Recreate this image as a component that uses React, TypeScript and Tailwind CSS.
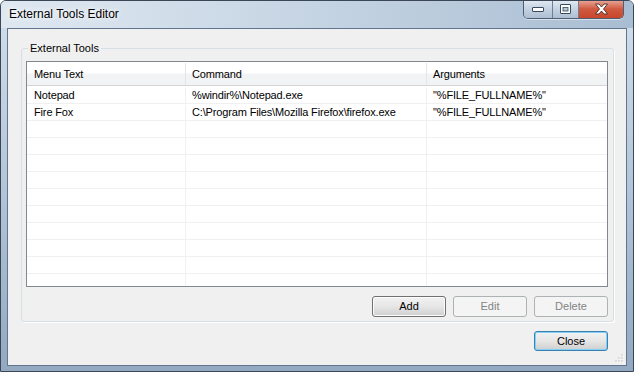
import React from 'react';

const rows = [
  { name: 'Notepad', command: '%windir%\\Notepad.exe', args: '"%FILE_FULLNAME%"' },
  { name: 'Fire Fox', command: 'C:\\Program Files\\Mozilla Firefox\\firefox.exe', args: '"%FILE_FULLNAME%"' },
];

const EMPTY_ROWS = 11;

function CaptionButtons() {
  return (
    <div className="ml-auto mr-[9px] flex h-[19px] -mt-[1px] rounded-b-[5px] border border-t-0 border-[#4d5f74] overflow-hidden shadow-[0_1px_0_rgba(255,255,255,0.5)]">
      {/* minimize */}
      <div className="w-[29px] flex items-center justify-center bg-gradient-to-b from-[#e3ebf3] via-[#c4d2e1] to-[#aebfd3] border-r border-[#6b7f96]">
        <svg width="12" height="6" viewBox="0 0 12 6">
          <rect x="0.5" y="1.5" width="11" height="4" fill="#fff" stroke="#394a5e" rx="0.5" />
        </svg>
      </div>
      {/* maximize */}
      <div className="w-[26px] flex items-center justify-center bg-gradient-to-b from-[#e3ebf3] via-[#c4d2e1] to-[#aebfd3] border-r border-[#6b7f96]">
        <svg width="11" height="10" viewBox="0 0 11 10">
          <rect x="0.5" y="0.5" width="10" height="9" fill="#fff" stroke="#394a5e" rx="0.5" />
          <rect x="3" y="3.5" width="5" height="3.5" fill="#b7c6d6" stroke="#394a5e" strokeWidth="0.8" />
        </svg>
      </div>
      {/* close */}
      <div className="w-[44px] flex items-center justify-center bg-gradient-to-b from-[#e9a99a] via-[#cf5a40] to-[#c9452b]">
        <svg width="15" height="12" viewBox="0 0 15 12">
          <path
            d="M1.5 1 L5 1 L7.5 4 L10 1 L13.5 1 L9.5 6 L13.5 11 L10 11 L7.5 8 L5 11 L1.5 11 L5.5 6 Z"
            fill="#fff"
            stroke="#4a2a22"
            strokeWidth="0.9"
            strokeLinejoin="round"
          />
        </svg>
      </div>
    </div>
  );
}

function WinButton({ label, disabled, isDefault }: { label: string; disabled?: boolean; isDefault?: boolean }) {
  if (disabled) {
    return (
      <div className="w-[74px] h-[21px] rounded-[3px] border border-[#adb2b5] bg-[#f4f4f4] flex items-center justify-center text-[11px] text-[#838383]">
        {label}
      </div>
    );
  }
  return (
    <div
      className={
        isDefault
          ? 'w-[74px] h-[20px] rounded-[3px] border border-[#3c7fb1] shadow-[inset_0_0_0_1px_#7fd1f5] bg-gradient-to-b from-[#f2f2f2] via-[#e6e6e6] to-[#cfcfcf] flex items-center justify-center text-[11px] text-black'
          : 'w-[74px] h-[21px] rounded-[3px] border border-[#707070] shadow-[inset_0_0_0_1px_#fcfcfc] bg-gradient-to-b from-[#f2f2f2] via-[#e6e6e6] to-[#cfcfcf] flex items-center justify-center text-[11px] text-black'
      }
    >
      {label}
    </div>
  );
}

export default function App() {
  return (
    <div className="w-[634px] h-[372px] flex flex-col border border-[#3b4756] rounded-t-[6px] bg-gradient-to-b from-[#d3dfeb] via-[#b3c5d8] to-[#93a9c1] font-['Liberation_Sans',Arial,sans-serif] overflow-hidden">
      {/* Title bar */}
      <div className="h-[27px] flex items-start shrink-0 bg-gradient-to-r from-[#dfe8f1] via-[#c5d4e3] to-[#a9bdd2]">
        <span className="pl-[8px] pt-[6px] text-[12px] leading-[14px] text-black [text-shadow:0_0_8px_#fff,0_0_4px_#fff]">
          External Tools Editor
        </span>
        <CaptionButtons />
      </div>

      {/* Client area */}
      <div className="mx-[6px] mb-[5px] h-[338px] border border-[#60758e] bg-[#f0f0f0] flex flex-col relative">
        {/* Group box */}
        <div className="ml-[13px] mt-[19px] w-[593px] h-[274px] rounded-[3px] border border-[#d5dfe5] shadow-[1px_1px_0_#fff] relative flex flex-col">
          <span className="absolute left-[6px] -top-[7px] px-[2px] bg-[#f0f0f0] text-[11px] leading-[13px] text-black">
            External Tools
          </span>

          {/* List view */}
          <div className="ml-[4px] mt-[12px] w-[582px] h-[226px] border border-[#828790] bg-white flex flex-col overflow-hidden text-[11px] tracking-[-0.15px] text-black">
            <div className="h-[24px] pt-[1px] flex shrink-0 border-b border-[#d5d5d5] bg-[linear-gradient(to_bottom,#ffffff_0%,#ffffff_45%,#f2f3f5_55%,#f2f3f5_100%)]">
              <div className="w-[159px] pl-[7px] flex items-center border-r border-[#e3e5e8]">Menu Text</div>
              <div className="w-[241px] pl-[6px] flex items-center border-r border-[#e3e5e8]">Command</div>
              <div className="flex-1 pl-[6px] flex items-center">Arguments</div>
            </div>
            <div className="h-[1px] shrink-0" />
            {rows.map((r) => (
              <div key={r.name} className="h-[17px] pt-[1px] flex shrink-0 border-b border-[#f0f0f0]">
                <div className="w-[159px] pl-[7px] flex items-center border-r border-[#f0f0f0]">{r.name}</div>
                <div className="w-[241px] pl-[6px] flex items-center border-r border-[#f0f0f0]">{r.command}</div>
                <div className="flex-1 pl-[6px] flex items-center">{r.args}</div>
              </div>
            ))}
            {Array.from({ length: EMPTY_ROWS }).map((_, i) => (
              <div key={i} className="h-[17px] flex shrink-0 border-b border-[#f0f0f0]">
                <div className="w-[159px] border-r border-[#f0f0f0]" />
                <div className="w-[241px] border-r border-[#f0f0f0]" />
                <div className="flex-1" />
              </div>
            ))}
          </div>

          {/* Buttons */}
          <div className="mt-[9px] pr-[5px] flex justify-end gap-[7px]">
            <WinButton label="Add" />
            <WinButton label="Edit" disabled />
            <WinButton label="Delete" disabled />
          </div>
        </div>

        <div className="mt-[9px] mr-[18px] self-end">
          <WinButton label="Close" isDefault />
        </div>

        {/* size grip */}
        <svg className="absolute right-[2px] bottom-[2px]" width="10" height="10" viewBox="0 0 10 10">
          {[
            [8, 2],
            [5, 5],
            [8, 5],
            [2, 8],
            [5, 8],
            [8, 8],
          ].map(([x, y]) => (
            <g key={`${x}-${y}`}>
              <rect x={x + 0.5} y={y + 0.5} width="1" height="1" fill="#fff" />
              <rect x={x - 0.5} y={y - 0.5} width="1" height="1" fill="#a0a0a0" />
            </g>
          ))}
        </svg>
      </div>
    </div>
  );
}
